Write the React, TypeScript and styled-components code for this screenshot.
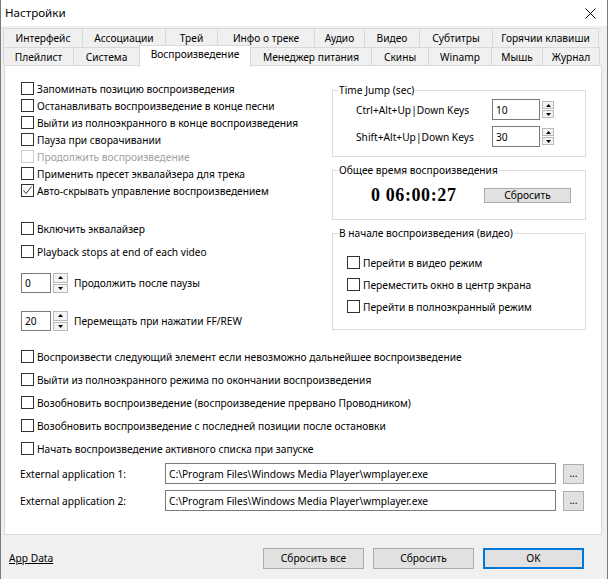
import React from "react";
import styled, { createGlobalStyle } from "styled-components";

const FONT = `"Noto Sans", "Open Sans", sans-serif`;

const GlobalStyle = createGlobalStyle`
  html, body { margin: 0; padding: 0; }
  body { background: #f0f0f0; font-family: ${FONT}; font-size: 10.2px; color: #000; }
  * { box-sizing: border-box; }
`;

const Window = styled.div`
  width: 608px;
  height: 579px;
  background: #f0f0f0;
  border-left: 1px solid #7a7a7a;
  border-right: 1px solid #7a7a7a;
  display: flex;
  flex-direction: column;
  overflow: hidden;
  font-family: ${FONT};
  font-size: 10.2px;
`;

const TitleBar = styled.div`
  flex: none;
  height: 26px;
  background: #fff;
  display: flex;
  align-items: center;
  justify-content: space-between;
  padding: 0 11px 0 4px;
`;

const Title = styled.span`
  font-size: 11.6px;
  line-height: 16px;
`;

const TabStrip = styled.div`
  flex: none;
  margin-top: 2px;
  padding-left: 2px;
  display: flex;
  flex-direction: column;
`;

const TabRow = styled.div<{ $h: number }>`
  display: flex;
  align-items: flex-start;
  height: ${(p) => p.$h}px;
`;

const Tab = styled.div<{ $w: number; $h: number; $active?: boolean }>`
  flex: none;
  width: ${(p) => p.$w}px;
  height: ${(p) => (p.$active ? p.$h + 4 : p.$h)}px;
  margin-left: -1px;
  margin-top: ${(p) => (p.$active ? -2 : 0)}px;
  &:first-child {
    margin-left: 0;
  }
  border: 1px solid #d9d9d9;
  border-bottom: none;
  background: ${(p) => (p.$active ? "#fff" : "#f0f0f0")};
  display: flex;
  justify-content: center;
  align-items: ${(p) => (p.$active ? "flex-start" : "center")};
  padding-top: ${(p) => (p.$active ? 1 : 0)}px;
  position: relative;
  z-index: ${(p) => (p.$active ? 2 : 1)};
  line-height: 14px;
  white-space: nowrap;
`;

const Panel = styled.div`
  flex: none;
  margin-left: 3px;
  width: 598px;
  height: 470px;
  background: #fff;
  border: 1px solid #d9d9d9;
  padding-top: 14px;
`;

const TopSection = styled.div`
  display: flex;
  padding-left: 16px;
`;

const LeftCol = styled.div`
  flex: none;
  width: 311px;
  display: flex;
  flex-direction: column;
`;

const RightCol = styled.div`
  flex: none;
  width: 254px;
  margin-top: 10px;
  display: flex;
  flex-direction: column;
  gap: 13px;
`;

const Stack = styled.div<{ $gap?: number; $mt?: number; $pl?: number }>`
  display: flex;
  flex-direction: column;
  gap: ${(p) => p.$gap ?? 0}px;
  margin-top: ${(p) => p.$mt ?? 0}px;
  padding-left: ${(p) => p.$pl ?? 0}px;
`;

const CheckLine = styled.div<{ $disabled?: boolean }>`
  display: flex;
  align-items: center;
  gap: 3px;
  height: 17px;
  white-space: nowrap;
  color: ${(p) => (p.$disabled ? "#a0a0a0" : "#000")};
  line-height: 14px;
`;

const Box = styled.span<{ $disabled?: boolean }>`
  flex: none;
  width: 13px;
  height: 13px;
  border: 1px solid ${(p) => (p.$disabled ? "#cccccc" : "#333333")};
  background: #fff;
  display: flex;
  align-items: center;
  justify-content: center;
`;

const Check = ({
  label,
  checked,
  disabled,
}: {
  label: string;
  checked?: boolean;
  disabled?: boolean;
}) => (
  <CheckLine $disabled={disabled}>
    <Box $disabled={disabled}>
      {checked && (
        <svg width="11" height="11" viewBox="0 0 11 11">
          <path d="M1.5 5.5 L4 8.5 L9.5 1.5" fill="none" stroke="#333" strokeWidth="1" />
        </svg>
      )}
    </Box>
    <span>{label}</span>
  </CheckLine>
);

const SpinRowLine = styled.div<{ $mt: number }>`
  display: flex;
  align-items: center;
  height: 20px;
  margin-top: ${(p) => p.$mt}px;
`;

const NumInput = styled.div<{ $w: number; $h: number }>`
  flex: none;
  width: ${(p) => p.$w}px;
  height: ${(p) => p.$h}px;
  border: 1px solid #7a7a7a;
  background: #fff;
  padding-left: 3px;
  display: flex;
  align-items: center;
  line-height: 14px;
`;

const Spinner = styled.div<{ $w: number; $h: number }>`
  flex: none;
  margin-left: 2px;
  width: ${(p) => p.$w}px;
  height: ${(p) => p.$h}px;
  display: flex;
  flex-direction: column;
  gap: 1px;
`;

const SpinHalf = styled.div`
  flex: 1;
  border: 1px solid #b9b9b9;
  background: #f4f4f4;
  display: flex;
  align-items: center;
  justify-content: center;
`;

const Up = () => (
  <svg width="5" height="3" viewBox="0 0 5 3">
    <path d="M0 3 L2.5 0 L5 3 Z" fill="#000" />
  </svg>
);
const Down = () => (
  <svg width="5" height="3" viewBox="0 0 5 3">
    <path d="M0 0 L2.5 3 L5 0 Z" fill="#000" />
  </svg>
);

const Spin = ({ value, w, h, sw, sh }: { value: string; w: number; h: number; sw: number; sh: number }) => (
  <>
    <NumInput $w={w} $h={h}>{value}</NumInput>
    <Spinner $w={sw} $h={sh}>
      <SpinHalf>
        <Up />
      </SpinHalf>
      <SpinHalf>
        <Down />
      </SpinHalf>
    </Spinner>
  </>
);

const SpinLabel = styled.span`
  margin-left: 6px;
  white-space: nowrap;
  line-height: 14px;
`;

const GroupBox = styled.div<{ $h: number }>`
  position: relative;
  height: ${(p) => p.$h}px;
  border: 1px solid #dcdcdc;
`;

const GroupLabel = styled.span`
  position: absolute;
  left: 5px;
  top: -8px;
  padding: 0 1px;
  background: #fff;
  line-height: 14px;
  white-space: nowrap;
`;

const JumpRows = styled.div`
  display: flex;
  flex-direction: column;
  gap: 6px;
  padding: 8px 0 0 23px;
`;

const JumpRow = styled.div`
  display: flex;
  align-items: center;
  height: 21px;
`;

const JumpLabel = styled.span`
  flex: none;
  width: 136px;
  white-space: nowrap;
  line-height: 14px;
`;

const TimeRow = styled.div`
  height: 100%;
  display: flex;
  align-items: center;
  padding-left: 38px;
`;

const TimeValue = styled.span`
  font-family: "Liberation Serif", serif;
  font-weight: bold;
  font-size: 18px;
  letter-spacing: 0.6px;
  line-height: 20px;
  width: 113px;
  flex: none;
`;

const SmallButton = styled.div`
  width: 87px;
  height: 15px;
  background: #e1e1e1;
  border: 1px solid #adadad;
  display: flex;
  align-items: center;
  justify-content: center;
  line-height: 13px;
`;

const BottomSection = styled.div`
  margin-top: 17px;
  padding-left: 16px;
`;

const ExtRows = styled.div`
  margin-top: 6px;
  padding-left: 15px;
  display: flex;
  flex-direction: column;
  gap: 6px;
`;

const ExtRow = styled.div`
  display: flex;
  align-items: center;
  height: 21px;
`;

const ExtLabel = styled.span`
  flex: none;
  width: 145px;
  white-space: nowrap;
  line-height: 14px;
`;

const PathInput = styled.div`
  flex: none;
  width: 391px;
  height: 21px;
  border: 1px solid #7a7a7a;
  background: #fff;
  padding-left: 3px;
  display: flex;
  align-items: center;
  white-space: nowrap;
  line-height: 14px;
`;

const DotsButton = styled.div`
  flex: none;
  margin-left: 7px;
  width: 21px;
  height: 20px;
  background: #e1e1e1;
  border: 1px solid #adadad;
  display: flex;
  align-items: center;
  justify-content: center;
  line-height: 14px;
  padding-bottom: 1px;
`;

const Footer = styled.div`
  flex: 1;
  display: flex;
  align-items: center;
  padding: 2px 23px 0 8px;
`;

const LinkText = styled.span`
  text-decoration: underline;
  line-height: 14px;
  margin-right: auto;
`;

const Buttons = styled.div`
  display: flex;
  gap: 9px;
`;

const DlgButton = styled.div<{ $default?: boolean }>`
  width: 101px;
  height: 21px;
  background: #e1e1e1;
  border: ${(p) => (p.$default ? "2px solid #0078d7" : "1px solid #adadad")};
  display: flex;
  align-items: center;
  justify-content: center;
  line-height: 14px;
`;

const row1 = [
  { t: "Интерфейс", w: 80 },
  { t: "Ассоциации", w: 84 },
  { t: "Трей", w: 53 },
  { t: "Инфо о треке", w: 98 },
  { t: "Аудио", w: 51 },
  { t: "Видео", w: 56 },
  { t: "Субтитры", w: 74 },
  { t: "Горячии клавиши", w: 107 },
];

const row2 = [
  { t: "Плейлист", w: 71 },
  { t: "Система", w: 67 },
  { t: "Воспроизведение", w: 112, active: true },
  { t: "Менеджер питания", w: 122 },
  { t: "Скины", w: 58 },
  { t: "Winamp", w: 64 },
  { t: "Мышь", w: 52 },
  { t: "Журнал", w: 58 },
];

export default function App() {
  return (
    <>
      <GlobalStyle />
      <Window>
        <TitleBar>
          <Title>Настройки</Title>
          <svg width="11" height="11" viewBox="0 0 11 11">
            <path d="M0.5 0.5 L10.5 10.5 M10.5 0.5 L0.5 10.5" stroke="#000" strokeWidth="1" />
          </svg>
        </TitleBar>

        <TabStrip>
          <TabRow $h={19}>
            {row1.map((t) => (
              <Tab key={t.t} $w={t.w} $h={19}>
                {t.t}
              </Tab>
            ))}
          </TabRow>
          <TabRow $h={18}>
            {row2.map((t) => (
              <Tab key={t.t} $w={t.w} $h={18} $active={t.active}>
                {t.t}
              </Tab>
            ))}
          </TabRow>
        </TabStrip>

        <Panel>
          <TopSection>
            <LeftCol>
              <Stack>
                <Check label="Запоминать позицию воспроизведения" />
                <Check label="Останавливать воспроизведение в конце песни" />
                <Check label="Выйти из полноэкранного в конце воспроизведения" />
                <Check label="Пауза при сворачивании" />
                <Check label="Продолжить воспроизведение" disabled />
                <Check label="Применить пресет эквалайзера для трека" />
                <Check label="Авто-скрывать управление воспроизведением" checked />
              </Stack>
              <Stack $gap={6} $mt={21}>
                <Check label="Включить эквалайзер" />
                <Check label="Playback stops at end of each video" />
              </Stack>
              <SpinRowLine $mt={13}>
                <Spin value="0" w={30} h={20} sw={15} sh={20} />
                <SpinLabel>Продолжить после паузы</SpinLabel>
              </SpinRowLine>
              <SpinRowLine $mt={18}>
                <Spin value="20" w={30} h={20} sw={15} sh={20} />
                <SpinLabel>Перемещать при нажатии FF/REW</SpinLabel>
              </SpinRowLine>
            </LeftCol>

            <RightCol>
              <GroupBox $h={67}>
                <GroupLabel>Time Jump (sec)</GroupLabel>
                <JumpRows>
                  <JumpRow>
                    <JumpLabel>Ctrl+Alt+Up|Down Keys</JumpLabel>
                    <Spin value="10" w={48} h={21} sw={12} sh={17} />
                  </JumpRow>
                  <JumpRow>
                    <JumpLabel>Shift+Alt+Up|Down Keys</JumpLabel>
                    <Spin value="30" w={48} h={21} sw={12} sh={17} />
                  </JumpRow>
                </JumpRows>
              </GroupBox>

              <GroupBox $h={50}>
                <GroupLabel>Общее время воспроизведения</GroupLabel>
                <TimeRow>
                  <TimeValue>0 06:00:27</TimeValue>
                  <SmallButton>Сбросить</SmallButton>
                </TimeRow>
              </GroupBox>

              <GroupBox $h={97}>
                <GroupLabel>В начале воспроизведения (видео)</GroupLabel>
                <Stack $gap={5} $pl={14} $mt={20}>
                  <Check label="Перейти в видео режим" />
                  <Check label="Переместить окно в центр экрана" />
                  <Check label="Перейти в полноэкранный режим" />
                </Stack>
              </GroupBox>
            </RightCol>
          </TopSection>

          <BottomSection>
            <Stack $gap={6}>
              <Check label="Воспроизвести следующий элемент если невозможно дальнейшее воспроизведение" />
              <Check label="Выйти из полноэкранного режима по окончании воспроизведения" />
              <Check label="Возобновить воспроизведение (воспроизведение прервано Проводником)" />
              <Check label="Возобновить воспроизведение с последней позиции после остановки" />
              <Check label="Начать воспроизведение активного списка при запуске" />
            </Stack>
          </BottomSection>

          <ExtRows>
            <ExtRow>
              <ExtLabel>External application 1:</ExtLabel>
              <PathInput>C:\Program Files\Windows Media Player\wmplayer.exe</PathInput>
              <DotsButton>...</DotsButton>
            </ExtRow>
            <ExtRow>
              <ExtLabel>External application 2:</ExtLabel>
              <PathInput>C:\Program Files\Windows Media Player\wmplayer.exe</PathInput>
              <DotsButton>...</DotsButton>
            </ExtRow>
          </ExtRows>
        </Panel>

        <Footer>
          <LinkText>App Data</LinkText>
          <Buttons>
            <DlgButton>Сбросить все</DlgButton>
            <DlgButton>Сбросить</DlgButton>
            <DlgButton $default>OK</DlgButton>
          </Buttons>
        </Footer>
      </Window>
    </>
  );
}
